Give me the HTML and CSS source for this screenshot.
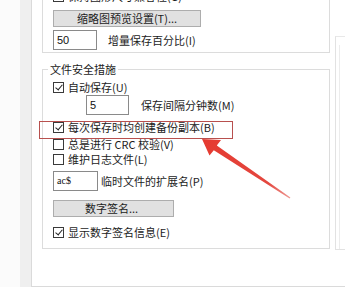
FILE: index.html
```html
<!DOCTYPE html>
<html lang="zh-CN">
<head>
<meta charset="utf-8">
<link rel="stylesheet" href="styles.css">
</head>
<body>
<div class="screen">
  <div class="gutter"></div>
  <div class="strip"></div>
  <div class="panel">
    <div class="main">
      <div class="group g1">
        <div class="row cbrow cut"><span class="cb checked"></span><span>保持图形尺寸兼容性(G)</span></div>
        <div class="btn btn-thumb">缩略图预览设置(T)...</div>
        <div class="row r-pct"><span class="input w-pct">50</span><span class="lbl l-pct">增量保存百分比(I)</span></div>
      </div>
      <div class="group g2">
        <span class="legend">文件安全措施</span>
        <div class="row cbrow r-auto"><span class="cb checked"></span><span>自动保存(U)</span></div>
        <div class="row r-interval"><span class="input w-int">5</span><span class="lbl l-int">保存间隔分钟数(M)</span></div>
        <div class="row cbrow r-backup"><span class="cb checked"></span><span>每次保存时均创建备份副本(B)</span></div>
        <div class="row cbrow r-crc"><span class="cb"></span><span>总是进行 CRC 校验(V)</span></div>
        <div class="row cbrow r-log"><span class="cb"></span><span>维护日志文件(L)</span></div>
        <div class="row r-ext"><span class="input w-ext small">ac$</span><span class="lbl l-ext">临时文件的扩展名(P)</span></div>
        <div class="btn btn-sign">数字签名...</div>
        <div class="row cbrow r-show"><span class="cb checked"></span><span>显示数字签名信息(E)</span></div>
      </div>
    </div>
    <div class="side">
      <div class="side-box"><div class="side-inner"></div></div>
    </div>
  </div>
  <div class="highlight"></div>
  <svg class="arrow" width="345" height="287" viewBox="0 0 345 287">
    <defs>
      <linearGradient id="ag" x1="202" y1="139" x2="290" y2="198" gradientUnits="userSpaceOnUse">
        <stop offset="0" stop-color="#e53a30"/>
        <stop offset="0.75" stop-color="#e4473f"/>
        <stop offset="1" stop-color="#ee9a94"/>
      </linearGradient>
    </defs>
    <polygon fill="url(#ag)" points="202,139 221,140 216.8,145.6 290.4,197.6 289.6,198.4 213.8,150.2 209.5,155.5"/>
  </svg>
</div>
</body>
</html>
```
FILE: styles.css
```css
html, body {
  margin: 0;
  padding: 0;
  background: #ffffff;
}
body {
  font-family: "Noto Sans CJK SC", "Noto Sans", sans-serif;
  font-size: 11px;
  color: #1c1c1c;
}
.screen {
  position: relative;
  width: 345px;
  height: 287px;
  overflow: hidden;
  display: flex;
  background: #ffffff;
}
.gutter {
  width: 20px;
  flex: none;
  background: #fbfbfb;
}
.strip {
  width: 11px;
  flex: none;
  background: #efefef;
}
.panel {
  flex: none;
  width: 320px;
  height: 286px;
  border-left: 1px solid #dadada;
  border-bottom: 1px solid #dadada;
  display: flex;
  align-items: flex-start;
  background: #ffffff;
}
.main {
  flex: none;
  padding-left: 10px;
  width: 288px;
}
.group {
  position: relative;
  box-sizing: border-box;
  width: 288px;
  border: 1px solid #dcdcdc;
  padding-left: 10px;
  display: flex;
  flex-direction: column;
  align-items: flex-start;
}
.g1 {
  border-top: none;
  padding-bottom: 2px;
}
.g2 {
  margin-top: 16px;
  padding-top: 0;
  padding-bottom: 9px;
}
.legend {
  position: absolute;
  left: 5px;
  top: -8px;
  padding: 0 2px;
  background: #ffffff;
  line-height: 14px;
  color: #1c1c1c;
}
.row {
  display: flex;
  align-items: center;
  white-space: nowrap;
}
.cbrow {
  height: 13px;
  line-height: 13px;
}
.cb {
  box-sizing: border-box;
  width: 11px;
  height: 11px;
  border: 1px solid #3a3a3a;
  background: #ffffff;
  margin-right: 4px;
  flex: none;
  position: relative;
}
.cb.checked::after {
  content: "";
  position: absolute;
  left: 3px;
  top: 0px;
  width: 3px;
  height: 6px;
  border-right: 1px solid #222;
  border-bottom: 1px solid #222;
  transform: rotate(40deg);
}
.cut {
  margin-top: -10px;
}
.btn {
  box-sizing: border-box;
  height: 17px;
  line-height: 15px;
  background: #e1e1e1;
  border: 1px solid #adadad;
  text-align: center;
  color: #1c1c1c;
}
.btn-thumb {
  width: 148px;
  margin-top: 7px;
}
.btn-sign {
  width: 121px;
  margin-top: 9px;
  text-indent: -4px;
}
.input {
  box-sizing: border-box;
  height: 20px;
  line-height: 18px;
  border: 1px solid #8a8a8a;
  background: #ffffff;
  padding-left: 3px;
  font-family: "Liberation Sans", "Noto Sans", sans-serif;
  font-size: 11px;
  color: #111;
  flex: none;
}
.input.small {
  font-family: "Liberation Serif", serif;
  font-size: 10px;
}
.w-pct { width: 44px; }
.w-int { width: 43px; margin-left: 33px; }
.w-ext { width: 45px; }
.r-pct { margin-top: 3px; }
.l-pct { margin-left: 11px; }
.r-auto { margin-top: 11px; }
.r-interval { margin-top: 1px; }
.l-int { margin-left: 12px; }
.r-backup { margin-top: 6px; }
.r-crc { margin-top: 4px; }
.r-log { margin-top: 2px; }
.r-ext { margin-top: 5px; }
.l-ext { margin-left: 3px; }
.r-show { margin-top: 9px; }
.side {
  flex: none;
  margin-left: 5px;
  margin-top: 36px;
  width: 20px;
}
.side-box {
  box-sizing: border-box;
  height: 214px;
  border-left: 1px solid #e2e2e2;
  border-top: 1px solid #e8e8e8;
  border-bottom: 1px solid #e2e2e2;
  padding-left: 3px;
  padding-top: 8px;
}
.side-inner {
  height: 204px;
  border-left: 1px solid #ececec;
}
.highlight {
  position: absolute;
  left: 39px;
  top: 121px;
  width: 192px;
  height: 16px;
  border: 1px solid #b8504e;
}
.arrow {
  position: absolute;
  left: 0;
  top: 0;
}
```
